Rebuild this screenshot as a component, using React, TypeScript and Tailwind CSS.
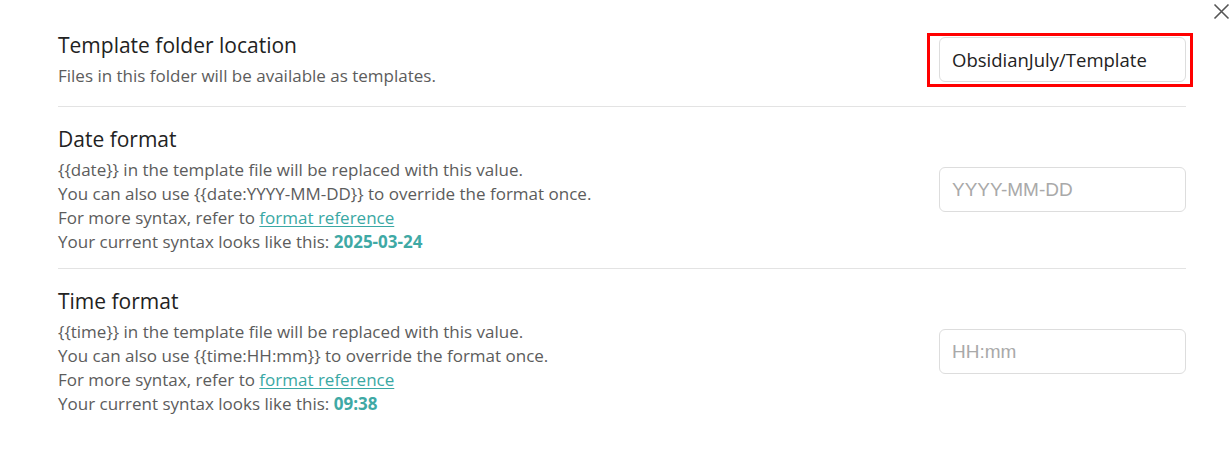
import React from "react";

const font = { fontFamily: '"Open Sans", "Noto Sans", sans-serif' };

function Row({
  title,
  children,
  input,
  last,
  pad,
}: {
  title: string;
  children: React.ReactNode;
  input: React.ReactNode;
  last?: boolean;
  pad: string;
}) {
  return (
    <div
      className={`flex items-center justify-between ${pad} ${
        last ? "" : "border-b border-[#e3e3e3]"
      }`}
    >
      <div className="flex flex-col">
        <div className="text-[21px] leading-[28px] text-[#222222] mb-[5px]">{title}</div>
        <div className="text-[17px] leading-[24px] text-[#5c5c5c]">{children}</div>
      </div>
      {input}
    </div>
  );
}

function Input({ value, placeholder }: { value?: string; placeholder?: string }) {
  return (
    <input
      readOnly
      defaultValue={value}
      placeholder={placeholder}
      className="w-[247px] h-[45px] rounded-[6px] border border-[#dddddd] bg-white px-[12px] text-[#222222] placeholder:text-[#a9a9a9] outline-none"
      style={
        value
          ? { ...font, fontSize: 18.5 }
          : { fontFamily: '"Liberation Sans", Arial, sans-serif', fontSize: 19 }
      }
    />
  );
}

export default function App() {
  return (
    <div className="relative w-[1232px] h-[461px] bg-white" style={font}>
      <button className="absolute left-[1212px] top-[2px] w-[19px] h-[19px] flex items-center justify-center">
        <svg width="17" height="17" viewBox="0 0 17 17">
          <path d="M1.5 1.5 L15.5 15.5 M15.5 1.5 L1.5 15.5" stroke="#555" strokeWidth="1.6" fill="none" />
        </svg>
      </button>
      <div className="pl-[58px] pr-[46px] pt-[12px]">
        <Row
          title="Template folder location"
          pad="pt-[19px] pb-[18px]"
          input={
            <div className="border-[3px] border-[#ff0000] pl-[9px] pr-[4px] pt-[1px] pb-[2px] -mr-[7px]">
              <Input value="ObsidianJuly/Template" />
            </div>
          }
        >
          <div>Files in this folder will be available as templates.</div>
        </Row>
        <Row title="Date format" pad="pt-[18px] pb-[14px]" input={<Input placeholder="YYYY-MM-DD" />}>
          <div>{"{{date}} in the template file will be replaced with this value."}</div>
          <div>{"You can also use {{date:YYYY-MM-DD}} to override the format once."}</div>
          <div>
            For more syntax, refer to{" "}
            <a className="text-[#3aa8a4] underline underline-offset-2" href="#">
              format reference
            </a>
          </div>
          <div>
            Your current syntax looks like this:{" "}
            <span className="font-bold text-[#3fa9a5]">2025-03-24</span>
          </div>
        </Row>
        <Row title="Time format" last pad="pt-[18px] pb-[14px]" input={<Input placeholder="HH:mm" />}>
          <div>{"{{time}} in the template file will be replaced with this value."}</div>
          <div>{"You can also use {{time:HH:mm}} to override the format once."}</div>
          <div>
            For more syntax, refer to{" "}
            <a className="text-[#3aa8a4] underline underline-offset-2" href="#">
              format reference
            </a>
          </div>
          <div>
            Your current syntax looks like this:{" "}
            <span className="font-bold text-[#3fa9a5]">09:38</span>
          </div>
        </Row>
      </div>
    </div>
  );
}
